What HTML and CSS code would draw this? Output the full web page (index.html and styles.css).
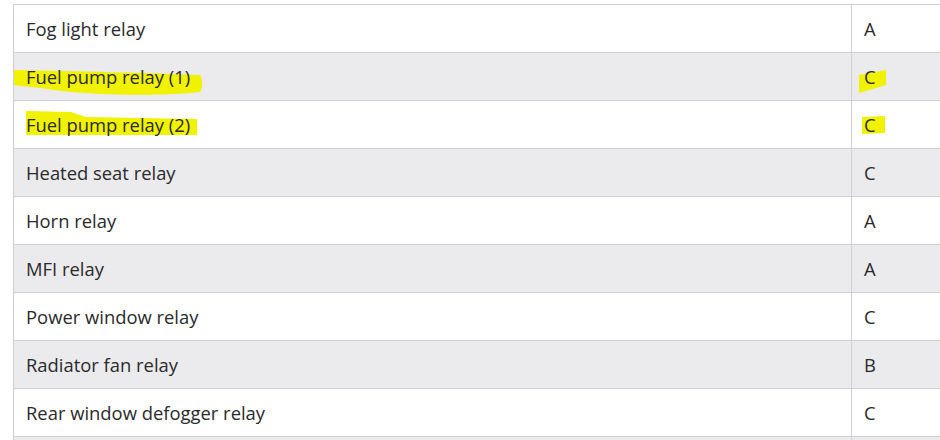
FILE: index.html
```html
<!DOCTYPE html>
<html>
<head>
<meta charset="utf-8">
<link rel="stylesheet" href="styles.css">
</head>
<body>
<div class="wrap">
<table class="relays">
<colgroup><col class="c-name"><col class="c-type"></colgroup>
<tbody>
<tr><td>Fog light relay</td><td>A</td></tr>
<tr><td class="hl-cell"><svg class="mark mark-1" viewBox="0 0 190 27" width="190" height="27"><path d="M0 0 C60 1 140 3 186 5 C189 10 189 18 186 22 C150 26 90 26 40 20 C20 17 5 16 0 15 Z"/></svg><span class="txt">Fuel pump relay (1)</span></td><td class="hl-cell"><svg class="mark mark-c1" viewBox="0 0 28 24" width="28" height="24"><path d="M0 5 L27 0 L27 15 L0 23 Z"/></svg><span class="txt">C</span></td></tr>
<tr><td class="hl-cell"><svg class="mark mark-2" viewBox="0 0 172 25" width="172" height="25"><path d="M0 0 L45 1 L60 6 L171 8 L171 24 L80 24 L0 24 Z"/></svg><span class="txt">Fuel pump relay (2)</span></td><td class="hl-cell"><svg class="mark mark-c2" viewBox="0 0 23 18" width="23" height="18"><path d="M0 1 L23 0 L23 17 L0 18 Z"/></svg><span class="txt">C</span></td></tr>
<tr><td>Heated seat relay</td><td>C</td></tr>
<tr><td>Horn relay</td><td>A</td></tr>
<tr><td>MFI relay</td><td>A</td></tr>
<tr><td>Power window relay</td><td>C</td></tr>
<tr><td>Radiator fan relay</td><td>B</td></tr>
<tr><td>Rear window defogger relay</td><td>C</td></tr>
<tr><td>&nbsp;</td><td>&nbsp;</td></tr>
</tbody>
</table>
</div>
</body>
</html>
```
FILE: styles.css
```css
html, body {
  margin: 0;
  padding: 0;
  background: #ffffff;
  overflow: hidden;
}
.wrap {
  padding: 4px 0 0 13px;
  height: 436px;
  width: 927px;
  overflow: hidden;
}
.relays {
  border-collapse: collapse;
  width: 1000px;
  font-family: "Open Sans", "Noto Sans", sans-serif;
  font-size: 18.4px;
  color: #2a2a2a;
}
.c-name { width: 838px; }
.relays td {
  border: 1px solid #cfcfd2;
  height: 48px;
  padding: 0 12px;
  box-sizing: border-box;
  vertical-align: middle;
  line-height: 20px;
}
.relays tr:nth-child(even) td {
  background: #ebebee;
}
.hl-cell {
  position: relative;
}
.txt {
  position: relative;
}
.mark {
  position: absolute;
  fill: #f0f200;
}
.mark-1 { left: 0; top: 17px; }
.mark-2 { left: 12px; top: 10px; }
.mark-c1 { left: 7px; top: 17px; }
.mark-c2 { left: 10px; top: 15px; }
```
